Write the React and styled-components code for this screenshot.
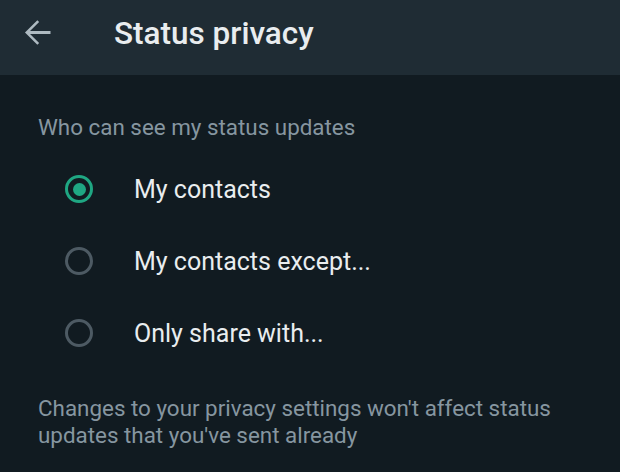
import React, { useState } from "react";
import styled, { createGlobalStyle } from "styled-components";

const GlobalStyle = createGlobalStyle`
  html, body {
    margin: 0;
    padding: 0;
    background: #111b21;
  }
  body {
    font-family: Roboto, "Liberation Sans", sans-serif;
    -webkit-font-smoothing: antialiased;
  }
`;

const options = ["My contacts", "My contacts except...", "Only share with..."];

function App() {
  const [selected, setSelected] = useState(0);

  return (
    <Screen>
      <GlobalStyle />
      <Header>
        <BackButton aria-label="Back">
          <svg width="39" height="39" viewBox="0 0 24 24">
            <path
              d="M20 11.1H7.4l5.6-5.6L11.9 4.4 4.3 12l7.6 7.6 1.1-1.1-5.6-5.6H20z"
              fill="#aebac1"
            />
          </svg>
        </BackButton>
        <Title>Status privacy</Title>
      </Header>
      <Content>
        <SectionLabel>Who can see my status updates</SectionLabel>
        <OptionList>
          {options.map((label, i) => (
            <Option key={label} onClick={() => setSelected(i)}>
              <Radio $checked={selected === i} />
              <OptionText>{label}</OptionText>
            </Option>
          ))}
        </OptionList>
        <Note>
          Changes to your privacy settings won't affect status updates that
          you've sent already
        </Note>
      </Content>
    </Screen>
  );
}

const Screen = styled.div`
  width: 620px;
  height: 472px;
  background: #111b21;
  overflow: hidden;
`;

const Header = styled.header`
  height: 75px;
  background: #1f2c34;
  display: flex;
  align-items: center;
  padding: 0 0 0 18px;
  box-sizing: border-box;
`;

const BackButton = styled.div`
  width: 39px;
  height: 39px;
  display: flex;
  margin-top: -11px;
`;

const Title = styled.h1`
  margin: -9px 0 0 57px;
  font-size: 31.5px;
  font-weight: 500;
  color: #e9edef;
`;

const Content = styled.main`
  padding: 40px 38px 0;
`;

const SectionLabel = styled.div`
  font-size: 22.4px;
  color: #8696a0;
  line-height: 24px;
`;

const OptionList = styled.div`
  display: flex;
  flex-direction: column;
  margin-top: 14px;
`;

const Option = styled.div`
  display: flex;
  align-items: center;
  height: 72px;
  padding-left: 27px;
  cursor: pointer;
`;

const Radio = styled.span`
  width: 28px;
  height: 28px;
  box-sizing: border-box;
  border-radius: 50%;
  border: 3.5px solid ${(p) => (p.$checked ? "#1fa783" : "#4d5a63")};
  display: flex;
  align-items: center;
  justify-content: center;

  &::after {
    content: "";
    width: 13px;
    height: 13px;
    border-radius: 50%;
    background: #1fa783;
    display: ${(p) => (p.$checked ? "block" : "none")};
  }
`;

const OptionText = styled.span`
  margin-left: 41px;
  font-size: 25px;
  color: #e9edef;
`;

const Note = styled.p`
  margin: 26px 0 0;
  font-size: 22.4px;
  line-height: 27px;
  color: #8696a0;
`;

export default App;
